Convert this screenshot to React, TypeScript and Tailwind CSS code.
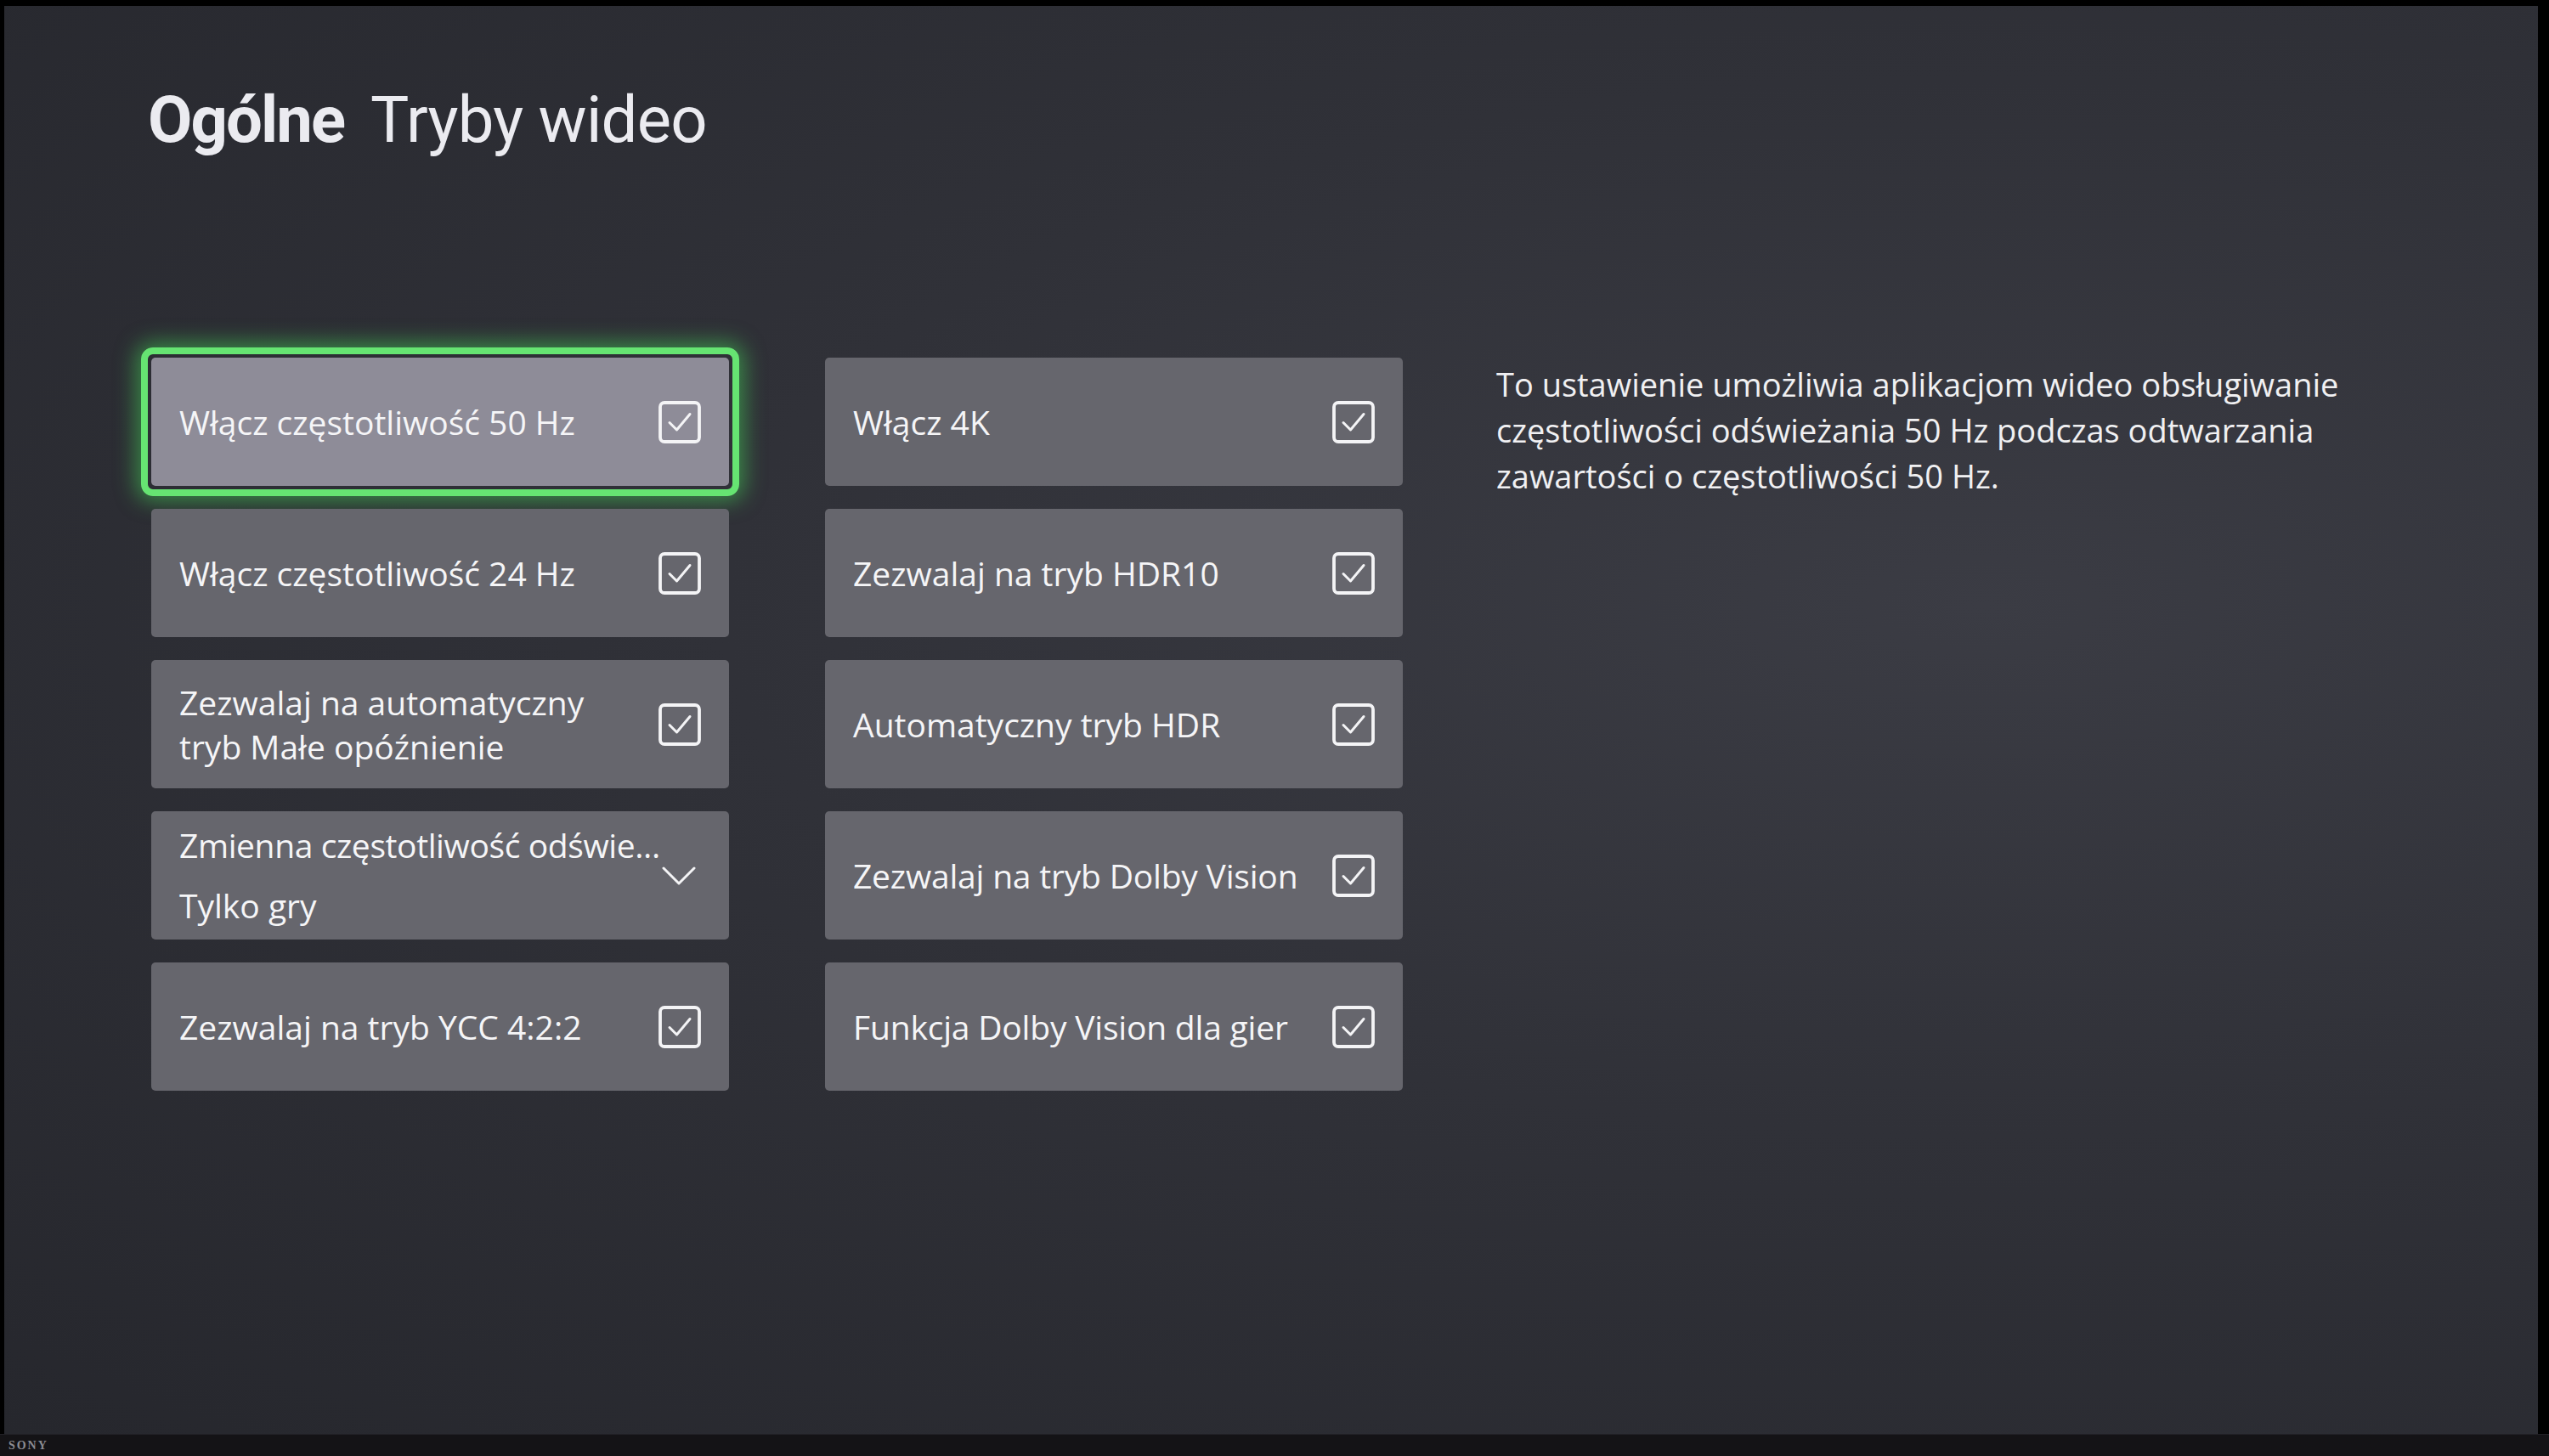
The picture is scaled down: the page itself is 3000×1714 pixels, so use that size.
import React from "react"

const sans = "font-['Open_Sans','Noto_Sans',sans-serif]"

function CheckBox() {
  return (
    <svg width="50" height="50" viewBox="0 0 50 50" fill="none" className="shrink-0">
      <rect x="2" y="2" width="46" height="46" rx="5" stroke="#f4f4f6" strokeWidth="3.8" />
      <polyline
        points="13,25.5 21.5,34 37,15.5"
        stroke="#f4f4f6"
        strokeWidth="3"
        strokeLinecap="round"
        strokeLinejoin="round"
      />
    </svg>
  )
}

function Chevron() {
  return (
    <svg width="40" height="24" viewBox="0 0 40 24" fill="none" className="mr-[6px] shrink-0">
      <polyline
        points="2,3 20,21 38,3"
        stroke="#f4f4f6"
        strokeWidth="3"
        strokeLinecap="round"
        strokeLinejoin="round"
      />
    </svg>
  )
}

function Tile({
  children,
  right,
  focused,
}: {
  children: React.ReactNode
  right: React.ReactNode
  focused?: boolean
}) {
  return (
    <div
      className={`relative flex h-[151px] w-[680px] items-center justify-between rounded-[5px] pl-[33px] pr-[33px] ${
        focused ? "bg-[#8e8c98]" : "bg-[#66666d]"
      }`}
    >
      {focused && (
        <div className="pointer-events-none absolute -inset-[12px] rounded-[14px] border-[8px] border-[#66e472] shadow-[0_0_24px_6px_rgba(70,225,90,0.5)]" />
      )}
      <div className={`${sans} min-w-0 text-[39px] leading-[52px] text-[#f5f5f7]`}>{children}</div>
      {right}
    </div>
  )
}

export default function App() {
  return (
    <div className="flex h-[1714px] w-[3000px] flex-col bg-black">
      <div className="ml-[5px] mr-[13px] mt-[7px] flex-1 bg-[radial-gradient(ellipse_at_78%_42%,#3b3c44_0%,#303138_45%,#26272d_100%)]">
        <h1 className="flex items-baseline gap-[31px] pl-[169px] pt-[96px] font-['Roboto',sans-serif] text-[76px] leading-none text-[#ebebf0]">
          <span className="font-bold tracking-[-0.025em]">Ogólne</span>
          <span className="font-normal tracking-[-0.01em]">Tryby wideo</span>
        </h1>

        <div className="mt-[242px] flex items-start gap-[110px] pl-[173px]">
          <div className="flex gap-[113px]">
            <div className="flex flex-col gap-[27px]">
              <Tile focused right={<CheckBox />}>
                Włącz częstotliwość 50 Hz
              </Tile>
              <Tile right={<CheckBox />}>Włącz częstotliwość 24 Hz</Tile>
              <Tile right={<CheckBox />}>
                <div>Zezwalaj na automatyczny</div>
                <div>tryb Małe opóźnienie</div>
              </Tile>
              <Tile right={<Chevron />}>
                <div className="flex flex-col gap-[19px]">
                  <div className="whitespace-nowrap tracking-[-0.01em]">Zmienna częstotliwość odświe...</div>
                  <div>Tylko gry</div>
                </div>
              </Tile>
              <Tile right={<CheckBox />}>Zezwalaj na tryb YCC 4:2:2</Tile>
            </div>

            <div className="flex flex-col gap-[27px]">
              <Tile right={<CheckBox />}>Włącz 4K</Tile>
              <Tile right={<CheckBox />}>Zezwalaj na tryb HDR10</Tile>
              <Tile right={<CheckBox />}>Automatyczny tryb HDR</Tile>
              <Tile right={<CheckBox />}>
                <span className="tracking-[-0.005em]">Zezwalaj na tryb Dolby Vision</span>
              </Tile>
              <Tile right={<CheckBox />}>
                <span className="tracking-[-0.005em]">Funkcja Dolby Vision dla gier</span>
              </Tile>
            </div>
          </div>

          <div className={`${sans} mt-[4px] text-[38px] leading-[54px] text-[#f0f0f2]`}>
            <div className="whitespace-nowrap">To ustawienie umożliwia aplikacjom wideo obsługiwanie</div>
            <div className="whitespace-nowrap">częstotliwości odświeżania 50 Hz podczas odtwarzania</div>
            <div className="whitespace-nowrap">zawartości o częstotliwości 50 Hz.</div>
          </div>
        </div>
      </div>

      <div className="flex h-[26px] items-center border-t border-[#222126] bg-[#141316] pl-[10px]">
        <span className="font-['Liberation_Serif',serif] text-[14px] font-bold tracking-[0.14em] text-[#8c8c92]">
          SONY
        </span>
      </div>
    </div>
  )
}
